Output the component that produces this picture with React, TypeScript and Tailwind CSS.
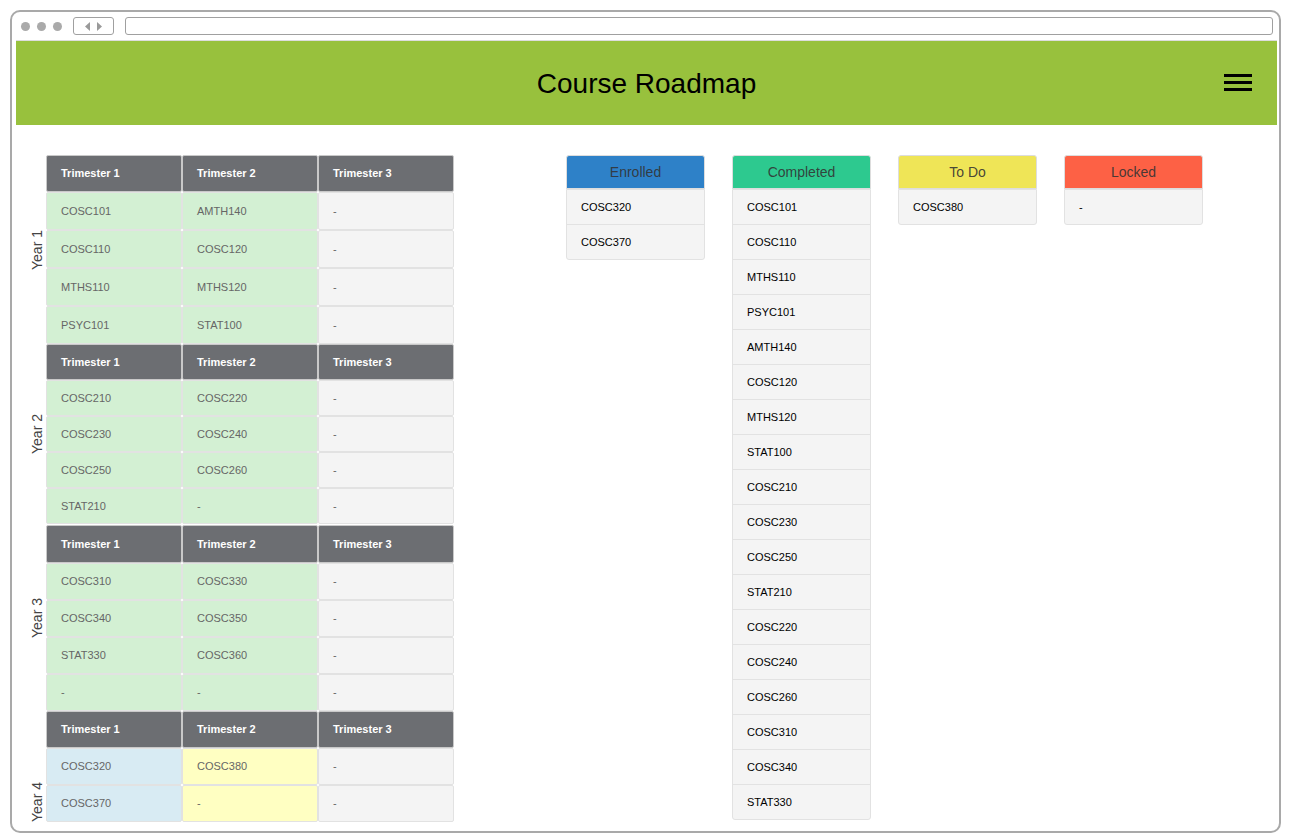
import React from "react";

type Cell = { text: string; tone: "done" | "enrolled" | "todo" | "none" };

const years: { label: string; head: string; row: string; block: string; labelPos: string; rows: Cell[][] }[] = [
    {
        label: "Year 1",
        head: "h-[37px]",
        row: "h-[38px]",
        block: "",
        labelPos: "items-center",
        rows: [
            [{ text: "COSC101", tone: "done" }, { text: "AMTH140", tone: "done" }, { text: "-", tone: "none" }],
            [{ text: "COSC110", tone: "done" }, { text: "COSC120", tone: "done" }, { text: "-", tone: "none" }],
            [{ text: "MTHS110", tone: "done" }, { text: "MTHS120", tone: "done" }, { text: "-", tone: "none" }],
            [{ text: "PSYC101", tone: "done" }, { text: "STAT100", tone: "done" }, { text: "-", tone: "none" }],
        ],
    },
    {
        label: "Year 2",
        head: "h-[36px]",
        row: "h-[36px]",
        block: "",
        labelPos: "items-center",
        rows: [
            [{ text: "COSC210", tone: "done" }, { text: "COSC220", tone: "done" }, { text: "-", tone: "none" }],
            [{ text: "COSC230", tone: "done" }, { text: "COSC240", tone: "done" }, { text: "-", tone: "none" }],
            [{ text: "COSC250", tone: "done" }, { text: "COSC260", tone: "done" }, { text: "-", tone: "none" }],
            [{ text: "STAT210", tone: "done" }, { text: "-", tone: "done" }, { text: "-", tone: "none" }],
        ],
    },
    {
        label: "Year 3",
        head: "h-[38px]",
        row: "h-[37px]",
        block: "mt-[1px]",
        labelPos: "items-center",
        rows: [
            [{ text: "COSC310", tone: "done" }, { text: "COSC330", tone: "done" }, { text: "-", tone: "none" }],
            [{ text: "COSC340", tone: "done" }, { text: "COSC350", tone: "done" }, { text: "-", tone: "none" }],
            [{ text: "STAT330", tone: "done" }, { text: "COSC360", tone: "done" }, { text: "-", tone: "none" }],
            [{ text: "-", tone: "done" }, { text: "-", tone: "done" }, { text: "-", tone: "none" }],
        ],
    },
    {
        label: "Year 4",
        head: "h-[37px]",
        row: "h-[37px]",
        block: "",
        labelPos: "items-end",
        rows: [
            [{ text: "COSC320", tone: "enrolled" }, { text: "COSC380", tone: "todo" }, { text: "-", tone: "none" }],
            [{ text: "COSC370", tone: "enrolled" }, { text: "-", tone: "todo" }, { text: "-", tone: "none" }],
        ],
    },
];

const toneClass: Record<Cell["tone"], string> = {
    done: "bg-[#d3f0d3]",
    enrolled: "bg-[#d8ebf3]",
    todo: "bg-[#ffffc2]",
    none: "bg-[#f4f4f4]",
};

const lists: { title: string; color: string; items: string[] }[] = [
    { title: "Enrolled", color: "bg-[#2e81c8]", items: ["COSC320", "COSC370"] },
    {
        title: "Completed",
        color: "bg-[#2dc98f]",
        items: [
            "COSC101", "COSC110", "MTHS110", "PSYC101", "AMTH140", "COSC120", "MTHS120", "STAT100", "COSC210",
            "COSC230", "COSC250", "STAT210", "COSC220", "COSC240", "COSC260", "COSC310", "COSC340", "STAT330",
        ],
    },
    { title: "To Do", color: "bg-[#efe557]", items: ["COSC380"] },
    { title: "Locked", color: "bg-[#fd6145]", items: ["-"] },
];

function YearBlock({ year }: { year: (typeof years)[number] }) {
    return (
        <div className={`flex ${year.block}`}>
            <div className={`w-[18px] flex justify-center ${year.labelPos}`}>
                {/* rotated label; bottom-aligned one needs its box sized to the text */}
                <span className="[writing-mode:vertical-rl] rotate-180 whitespace-nowrap text-[14px] text-[#444] leading-[18px]">{year.label}</span>
            </div>
            <div className="w-[408px] grid grid-cols-3">
                {["Trimester 1", "Trimester 2", "Trimester 3"].map((t) => (
                    <div key={t} className={`${year.head} flex items-center pl-[14px] bg-[#6c6e72] border border-[#c9c9c9] rounded-[2px] text-[11px] font-bold text-white`}>
                        {t}
                    </div>
                ))}
                {year.rows.flat().map((c, i) => (
                    <div key={i} className={`${year.row} ${toneClass[c.tone]} flex items-center pl-[14px] border border-[#e2e2e2] rounded-[2px] text-[11px] text-[#666]`}>
                        {c.text}
                    </div>
                ))}
            </div>
        </div>
    );
}

export default function App() {
    return (
        <div className="w-[1291px] h-[840px] bg-white p-[10px] font-['Liberation_Sans',Arial,sans-serif]">
            <div className="h-[823px] border-2 border-[#a9a9a9] rounded-[10px] flex flex-col overflow-hidden">
                {/* browser chrome */}
                <div className="h-[28px] flex items-center pl-[9px] pr-[6px] gap-[8px] shrink-0">
                    <div className="flex gap-[7px]">
                        <span className="w-[9px] h-[9px] rounded-full bg-[#aaaaaa]" />
                        <span className="w-[9px] h-[9px] rounded-full bg-[#aaaaaa]" />
                        <span className="w-[9px] h-[9px] rounded-full bg-[#aaaaaa]" />
                    </div>
                    <div className="ml-[3px] w-[41px] h-[18px] border border-[#a0a0a0] rounded-[3px] flex items-center justify-center gap-[7px]">
                        <svg width="5" height="9" viewBox="0 0 5 9"><path d="M5 0 L0 4.5 L5 9 Z" fill="#9a9a9a" /></svg>
                        <svg width="5" height="9" viewBox="0 0 5 9"><path d="M0 0 L5 4.5 L0 9 Z" fill="#9a9a9a" /></svg>
                    </div>
                    <div className="ml-[3px] flex-1 h-[18px] border border-[#a0a0a0] rounded-[3px]" />
                </div>

                {/* page */}
                <div className="flex-1 mx-[4px] mr-[2px] mb-[2px] border-t border-[#dddddd] flex flex-col">
                    <header className="h-[84px] bg-[#98c13d] flex items-center justify-center relative shrink-0">
                        <h1 className="text-[28px] text-black leading-none pt-[1px]">Course Roadmap</h1>
                        <div className="absolute right-[25px] top-[33px] flex flex-col gap-[4px]">
                            <span className="w-[28px] h-[3px] bg-black" />
                            <span className="w-[28px] h-[3px] bg-black" />
                            <span className="w-[28px] h-[3px] bg-black" />
                        </div>
                    </header>

                    <main className="flex pt-[30px] pl-[12px]">
                        <div className="flex flex-col">
                            {years.map((y) => (
                                <YearBlock key={y.label} year={y} />
                            ))}
                        </div>

                        <div className="ml-[112px] flex items-start gap-[27px]">
                            {lists.map((l) => (
                                <div key={l.title} className="w-[139px]">
                                    <div className={`${l.color} h-[34px] rounded-t-[3px] border border-[#dddddd] flex items-center justify-center text-[14px] text-[#333]/90`}>
                                        {l.title}
                                    </div>
                                    <div className="border border-[#e2e2e2] rounded-b-[3px] bg-[#f4f4f4]">
                                        {l.items.map((it, i) => (
                                            <div key={i} className={`flex items-center pl-[14px] text-[11px] text-black ${i > 0 ? "h-[35px] border-t border-[#e2e2e2]" : "h-[34px]"}`}>
                                                {it}
                                            </div>
                                        ))}
                                    </div>
                                </div>
                            ))}
                        </div>
                    </main>
                </div>
            </div>
        </div>
    );
}
